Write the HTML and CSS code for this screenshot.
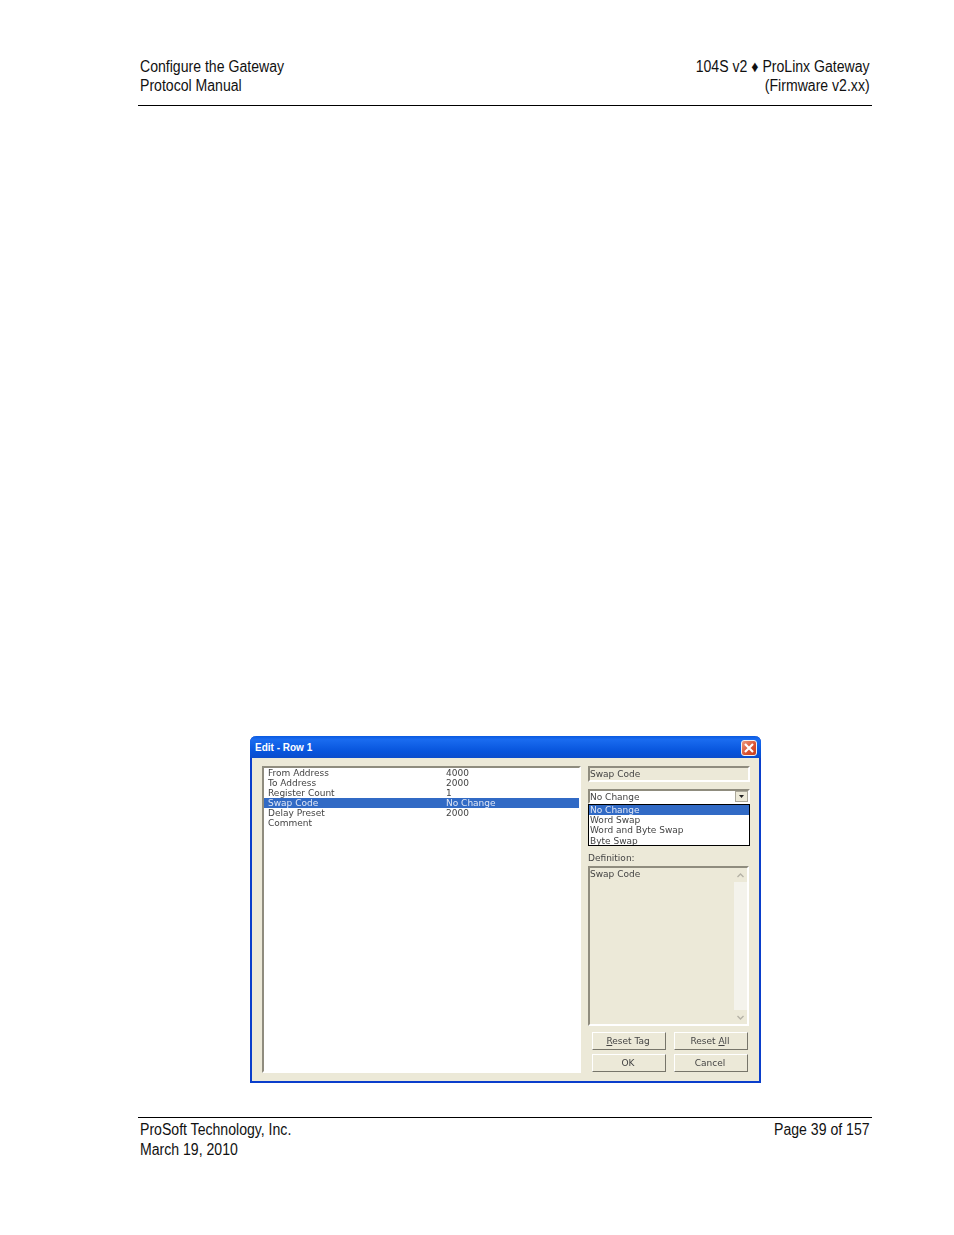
FILE: index.html
```html
<!DOCTYPE html>
<html lang="en">
<head>
    <meta charset="UTF-8">
    <title>Configure the Gateway</title>
    <link rel="stylesheet" href="styles.css">
</head>
<body>
    <div class="page-head">
        <div class="squeeze">Configure the Gateway<br>Protocol Manual</div>
        <div class="squeeze right">104S v2 ♦ ProLinx Gateway<br>(Firmware v2.xx)</div>
    </div>

    <div class="dialog">
        <div class="titlebar">
            <span>Edit - Row 1</span>
            <div class="close">
                <svg width="12" height="12" viewBox="0 0 12 12"><path d="M2 2 L10 10 M10 2 L2 10" stroke="#fff" stroke-width="2.2" fill="none"/></svg>
            </div>
        </div>
        <div class="dialog-body">
            <div class="list sunken">
                <div class="row"><span>From Address</span><span>4000</span></div>
                <div class="row"><span>To Address</span><span>2000</span></div>
                <div class="row"><span>Register Count</span><span>1</span></div>
                <div class="row selected"><span>Swap Code</span><span>No Change</span></div>
                <div class="row"><span>Delay Preset</span><span>2000</span></div>
                <div class="row"><span>Comment</span><span></span></div>
            </div>
            <div class="side">
                <div class="field sunken">Swap Code</div>
                <div class="combo sunken">
                    <span>No Change</span>
                    <div class="combo-btn">
                        <svg width="5" height="3" viewBox="0 0 5 3"><path d="M0 0 H5 L2.5 3 Z" fill="#222"/></svg>
                    </div>
                </div>
                <div class="dropdown">
                    <div class="option selected">No Change</div>
                    <div class="option">Word Swap</div>
                    <div class="option">Word and Byte Swap</div>
                    <div class="option">Byte Swap</div>
                </div>
                <div class="def-label">Definition:</div>
                <div class="definition sunken">
                    <div class="def-text">Swap Code</div>
                    <div class="scrollbar">
                        <div class="scroll-btn">
                            <svg width="7" height="5" viewBox="0 0 7 5"><path d="M0.5 4 L3.5 1 L6.5 4" stroke="#b5b2a6" stroke-width="1.4" fill="none"/></svg>
                        </div>
                        <div class="scroll-btn">
                            <svg width="7" height="5" viewBox="0 0 7 5"><path d="M0.5 1 L3.5 4 L6.5 1" stroke="#b5b2a6" stroke-width="1.4" fill="none"/></svg>
                        </div>
                    </div>
                </div>
                <div class="buttons">
                    <div class="btn"><span><u>R</u>eset Tag</span></div>
                    <div class="btn"><span>Reset <u>A</u>ll</span></div>
                    <div class="btn"><span>OK</span></div>
                    <div class="btn"><span>Cancel</span></div>
                </div>
            </div>
        </div>
    </div>

    <div class="page-foot">
        <div class="squeeze">ProSoft Technology, Inc.<br>March 19, 2010</div>
        <div class="squeeze right">Page 39 of 157</div>
    </div>
</body>
</html>
```
FILE: styles.css
```css
body {
    margin: 0;
    width: 954px;
    height: 1235px;
    background: #ffffff;
    color: #111;
    font-family: "Liberation Sans", Arial, sans-serif;
    overflow: hidden;
}
.page-head, .page-foot {
    display: flex;
    justify-content: space-between;
    width: 730px;
    margin-left: 138px;
    padding: 0 2px;
    font-size: 16px;
    line-height: 19px;
}
.page-head {
    margin-top: 57px;
    padding-bottom: 10px;
    border-bottom: 1px solid #000;
}
.page-foot {
    margin-top: 34px;
    padding-top: 2px;
    line-height: 20px;
    border-top: 1px solid #000;
}
/* the manual uses a narrow face, none installed */
.squeeze {
    transform: scaleX(0.88);
    transform-origin: left top;
}
.right {
    text-align: right;
    transform-origin: right top;
}
.dialog {
    width: 511px;
    height: 347px;
    margin: 630px 0 0 250px;
    box-sizing: border-box;
    display: flex;
    flex-direction: column;
    background: #ece9d8;
    border: 2px solid #0a3ecb;
    border-top: none;
    border-radius: 6px 6px 0 0;
    font-family: "DejaVu Sans", Verdana, sans-serif;
    font-size: 9px;
    color: #444;
    filter: blur(0.3px);
}
.titlebar {
    height: 22px;
    margin: 0 -2px;
    padding: 1px 4px 0 5px;
    box-sizing: border-box;
    display: flex;
    align-items: center;
    justify-content: space-between;
    background: linear-gradient(#0a5ae0, #1a6cf0 15%, #0754dc 70%, #0a4ccc);
    border-radius: 6px 6px 0 0;
    color: #fff;
    font-family: "Liberation Sans", Arial, sans-serif;
    font-weight: bold;
    font-size: 10px;
}
.close {
    width: 16px;
    height: 16px;
    box-sizing: border-box;
    display: flex;
    align-items: center;
    justify-content: center;
    background: linear-gradient(135deg, #ee9a7c, #d9502f 60%, #c8401f);
    border: 1px solid #f2f2f2;
    border-radius: 3px;
}
.dialog-body {
    flex: 1;
    display: flex;
    gap: 7px;
    padding: 8px 9px 8px 10px;
}
.sunken {
    box-sizing: border-box;
    border: 2px solid #fff;
    border-top-color: #8f8c7e;
    border-left-color: #8f8c7e;
}
.list {
    width: 319px;
    background: #fff;
}
.row {
    display: flex;
    height: 10.1px;
    line-height: 11px;
    padding-left: 4px;
}
.row span:first-child {
    width: 178px;
}
.selected {
    background: #316ac5;
    color: #dfe6f5;
}
.side {
    width: 162px;
    display: flex;
    flex-direction: column;
}
.field {
    height: 16px;
    line-height: 13px;
}
.combo {
    height: 15px;
    margin-top: 7px;
    display: flex;
    justify-content: space-between;
    align-items: center;
    background: #fff;
}
.combo-btn {
    width: 13px;
    height: 11px;
    display: flex;
    align-items: center;
    justify-content: center;
    background: #ece9d8;
    border: 1px solid #aaa79a;
    box-sizing: border-box;
}
.dropdown {
    height: 42px;
    box-sizing: border-box;
    background: #fff;
    border: 1px solid #000;
    overflow: hidden;
}
.option {
    height: 10.2px;
    line-height: 10px;
    padding-left: 1px;
}
.def-label {
    margin-top: 7px;
    height: 13px;
    line-height: 11px;
}
.definition {
    height: 160px;
    width: 161px;
    display: flex;
    justify-content: space-between;
}
.def-text {
    padding: 1px 0;
    line-height: 11px;
}
.scrollbar {
    width: 13px;
    display: flex;
    flex-direction: column;
    justify-content: space-between;
    background: #f4f3ec;
}
.scroll-btn {
    height: 14px;
    display: flex;
    align-items: center;
    justify-content: center;
    background: #ece9d8;
}
.buttons {
    margin: 6px 0 0 4px;
    display: grid;
    grid-template-columns: 74px 74px;
    grid-auto-rows: 18px;
    column-gap: 8px;
    row-gap: 4px;
}
.btn {
    box-sizing: border-box;
    display: flex;
    align-items: center;
    justify-content: center;
    padding-right: 2px;
    border: 1px solid #fff;
    border-right: 1px solid #77756a;
    border-bottom: 1px solid #77756a;
    font-size: 9px;
}
```
